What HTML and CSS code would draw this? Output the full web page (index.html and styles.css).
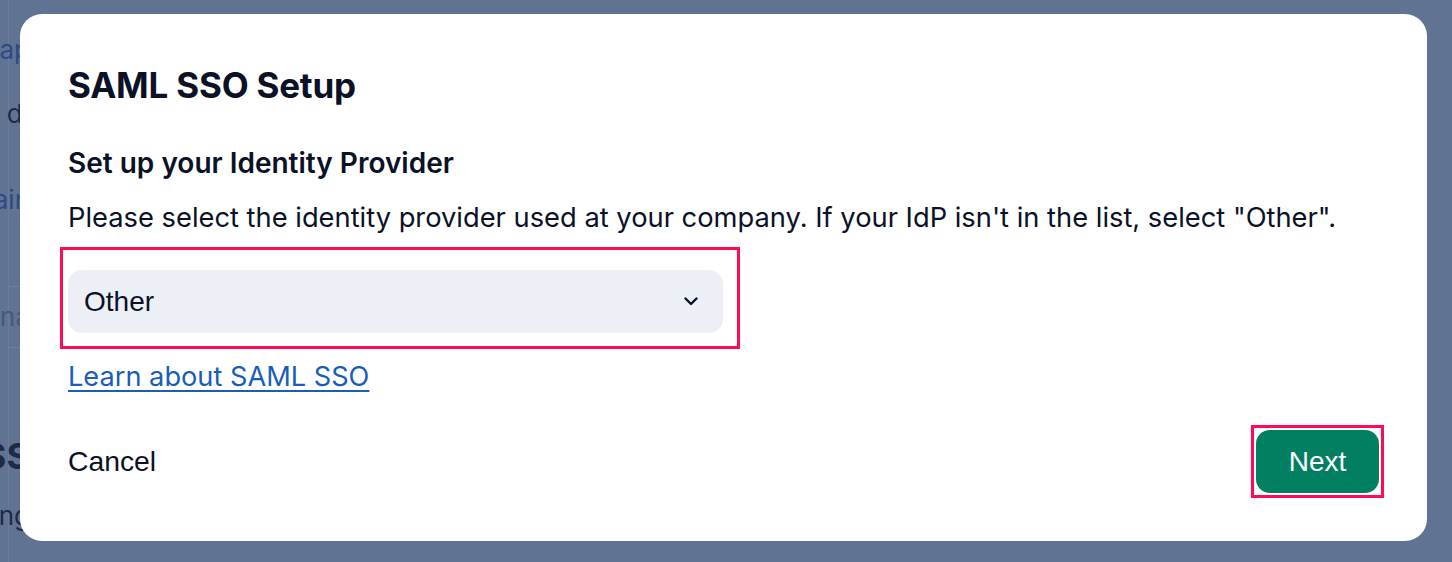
FILE: index.html
```html
<!DOCTYPE html>
<html lang="en">
<head>
    <meta charset="UTF-8">
    <meta name="viewport" content="width=device-width, initial-scale=1.0">
    <title>SAML SSO Setup</title>
    <link rel="stylesheet" href="styles.css">
</head>
<body>

    <!-- page behind the dialog -->
    <div class="page">
        <div class="bg-row bg-link r1">Overlap</div>
        <div class="bg-row r2">d&nbsp;</div>
        <div class="bg-row bg-link r3">Domain</div>
        <div class="bg-input">
            <div class="bg-row bg-muted">Domain na</div>
        </div>
        <div class="bg-row bg-title r4">SSO SS</div>
        <div class="bg-row r5">Setting</div>
    </div>

    <div class="overlay">
        <div class="modal">
            <h1>SAML SSO Setup</h1>

            <h2>Set up your Identity Provider</h2>
            <p class="intro">Please select the identity provider used at your company. If your IdP isn't in the list, select "Other".</p>

            <div class="highlight field">
                <div class="select">
                    <span>Other</span>
                    <svg width="14" height="9" viewBox="0 0 14 9"><path d="M1.5 1.5l5.5 5.5 5.5-5.5" fill="none" stroke="#0b1127" stroke-width="2.4" stroke-linecap="round" stroke-linejoin="round"/></svg>
                </div>
            </div>

            <a class="learn" href="#">Learn about SAML SSO</a>

            <div class="footer">
                <button class="btn-plain">Cancel</button>
                <span class="highlight next-wrap">
                    <button class="btn-next">Next</button>
                </span>
            </div>
        </div>
    </div>

</body>
</html>
```

FILE: styles.css
```css
body {
    margin: 0;
    background-color: #617393;
    font-family: 'Inter', 'Noto Sans', sans-serif;
    color: #0b1127;
    overflow: hidden;
    height: 562px;
}
.page {
    width: 22px;
    border-left: 1px solid #6b7c9a;
    margin-left: 8px;
    height: 562px;
    padding-top: 34px;
    box-sizing: border-box;
}
.bg-row {
    display: flex;
    justify-content: flex-end;
    white-space: nowrap;
    font-size: 26px;
    line-height: 32px;
    color: #1f2a47;
}
.bg-link {
    color: #2d4a85;
}
.bg-muted {
    color: #48587a;
}
.r2 {
    margin-top: 32px;
}
.r3 {
    margin-top: 54px;
}
.bg-input {
    margin-top: 70px;
    border-top: 1px solid #6f809d;
    border-bottom: 1px dotted #7c8ba6;
    padding: 14px 0 14px;
}
.bg-title {
    margin-top: 88px;
    font-weight: 700;
    font-size: 36px;
    line-height: 40px;
}
.r5 {
    margin-top: 24px;
}
.overlay {
    position: fixed;
    inset: 0;
}
.modal {
    position: absolute;
    left: 20px;
    top: 14px;
    width: 1407px;
    height: 527px;
    box-sizing: border-box;
    background: #ffffff;
    border-radius: 22px;
    padding: 50px 48px 48px;
    display: flex;
    flex-direction: column;
    align-items: flex-start;
}
h1 {
    margin: 0;
    font-size: 35px;
    line-height: 42px;
    font-weight: 700;
    letter-spacing: -0.2px;
}
h2 {
    margin: 40px 0 0;
    font-size: 28px;
    line-height: 34px;
    font-weight: 600;
}
.intro {
    margin: 21px 0 0;
    font-size: 27.3px;
    line-height: 34px;
}
.highlight {
    border: 3px solid #ff0a55;
}
.field {
    margin: 12px 0 0 -8px;
    padding: 20px 14px 13px 5px;
}
.select {
    width: 655px;
    height: 63px;
    box-sizing: border-box;
    background: #eceff6;
    border-radius: 14px;
    display: flex;
    align-items: center;
    justify-content: space-between;
    padding: 0 25px 0 16px;
    font-family: 'Liberation Sans', Arial, sans-serif;
    font-size: 28px;
}
.learn {
    margin-top: 11px;
    font-size: 27.2px;
    line-height: 34px;
    color: #1a5db8;
    text-decoration: underline;
    text-underline-offset: 4px;
    text-decoration-thickness: 2px;
}
.footer {
    margin-top: auto;
    width: 100%;
    display: flex;
    justify-content: space-between;
    align-items: center;
}
.btn-plain {
    background: none;
    border: none;
    padding: 0;
    font-family: 'Liberation Sans', Arial, sans-serif;
    font-size: 28.3px;
    color: #0b1127;
}
.next-wrap {
    display: flex;
    padding: 2px;
    margin: -5px -5px -5px 0;
}
.btn-next {
    width: 123px;
    height: 63px;
    background: #008060;
    color: #ffffff;
    border: none;
    border-radius: 14px;
    font-family: 'Liberation Sans', Arial, sans-serif;
    font-size: 28px;
}
```
